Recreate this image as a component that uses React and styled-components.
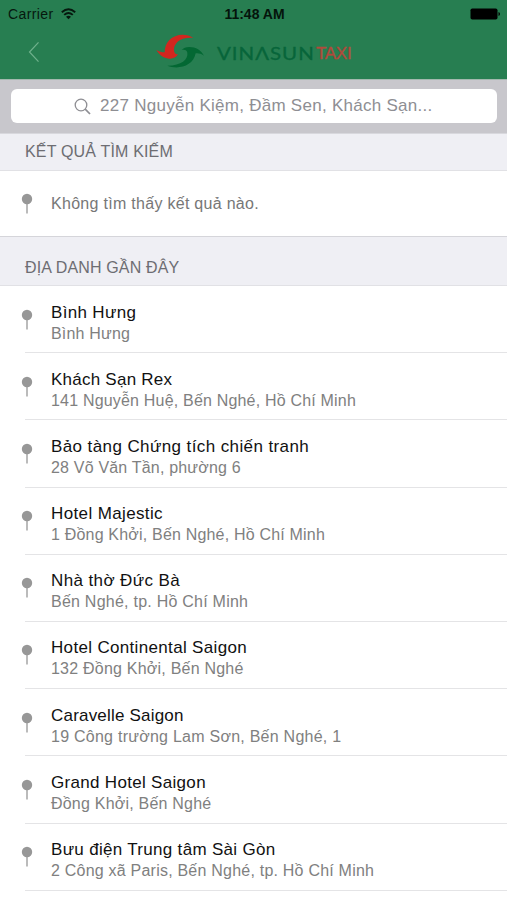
import React from "react";
import styled, { createGlobalStyle } from "styled-components";

const Global = createGlobalStyle`
  * { box-sizing: border-box; }
  body { margin: 0; background: #fff; font-family: "Liberation Sans", Arial, sans-serif; overflow: hidden; }
`;

const Screen = styled.main`
  width: 507px;
  height: 900px;
  overflow: hidden;
  background: #fff;
`;

const Header = styled.header`
  height: 79px;
  background: #277e51;
`;

const StatusBar = styled.div`
  height: 28px;
  padding: 0 6px 0 8px;
  display: grid;
  grid-template-columns: 1fr auto 1fr;
  align-items: center;
  color: #06180e;
  font-size: 14px;
`;

const Carrier = styled.div`
  display: flex;
  align-items: center;
  gap: 7px;
  letter-spacing: 0.4px;
`;

const Clock = styled.div`
  font-weight: 700;
  font-size: 14px;
  letter-spacing: 0;
  color: #04140b;
`;

const BatteryIcon = styled.svg`
  justify-self: end;
`;

const NavBar = styled.div`
  height: 51px;
  display: flex;
  align-items: center;
  padding: 0 0 3px 28px;
`;

const Brand = styled.div`
  display: flex;
  align-items: center;
  margin-left: 116px;
`;

const BrandName = styled.div`
  display: flex;
  align-items: center;
  margin: 4px 0 0 13px;
`;

const Vinasun = styled.span`
  width: 99px;
  font: 400 16.5px/20px Lato, sans-serif;
  letter-spacing: 0.8px;
  color: #07653a;
  -webkit-text-stroke: 0.3px #07653a;
  transform: scaleX(1.24);
  transform-origin: 0 50%;
`;

const Taxi = styled.span`
  font: 400 17px/20px "Liberation Sans", sans-serif;
  letter-spacing: -0.3px;
  color: #b14a3b;
  -webkit-text-stroke: 0.4px #b14a3b;
`;

const SearchBar = styled.div`
  height: 54px;
  padding: 9px 10px 10px 11px;
  background: #c8c7cc;
  border-top: 1px solid #a3b9ae;
`;

const SearchField = styled.div`
  height: 34px;
  border-radius: 6px;
  background: #fff;
  display: flex;
  align-items: center;
  padding-left: 63px;
  gap: 9px;
  color: #8e8e93;
`;

const Line = styled.span`
  display: block;
  white-space: nowrap;
  font-size: ${(p) => p.$size}px;
  line-height: ${(p) => p.$height}px;
  letter-spacing: ${(p) => p.$track || 0}px;
  color: ${(p) => p.$color};
`;

const SectionHeader = styled.h2`
  margin: 0;
  height: ${(p) => p.$height}px;
  padding: 0 0 ${(p) => p.$bottom}px 25px;
  display: flex;
  align-items: flex-end;
  background: #efeff4;
  border-top: 1px solid ${(p) => p.$edge};
  border-bottom: 1px solid #e1e1e5;
  font-weight: 400;
`;

const Row = styled.div`
  height: ${(p) => p.$height}px;
  display: flex;
  padding-left: 21px;
`;

const PinIcon = styled.svg`
  flex: none;
  margin-top: ${(p) => p.$top}px;
`;

const RowText = styled.div`
  flex: 1;
  margin-left: 4px;
  padding: ${(p) => p.$top}px 0 0 14px;
`;

const Body = styled.div`
  flex: 1;
  display: flex;
  position: relative;
  &::after {
    content: "";
    position: absolute;
    left: -8px;
    right: 0;
    bottom: 0;
    height: 1px;
    background: ${(p) => (p.$line ? "#e4e4e6" : "transparent")};
  }
`;

const places = [
  ["Bình Hưng", 0.33, "Bình Hưng", 0.2],
  ["Khách Sạn Rex", 0.24, "141 Nguyễn Huệ, Bến Nghé, Hồ Chí Minh", 0.19],
  ["Bảo tàng Chứng tích chiến tranh", 0.4, "28 Võ Văn Tần, phường 6", 0.19],
  ["Hotel Majestic", 0.37, "1 Đồng Khởi, Bến Nghé, Hồ Chí Minh", 0.19],
  ["Nhà thờ Đức Bà", 0.39, "Bến Nghé, tp. Hồ Chí Minh", 0.24],
  ["Hotel Continental Saigon", 0.33, "132 Đồng Khởi, Bến Nghé", 0.22],
  ["Caravelle Saigon", 0.2, "19 Công trường Lam Sơn, Bến Nghé, 1", 0.25],
  ["Grand Hotel Saigon", 0.31, "Đồng Khởi, Bến Nghé", 0.21],
  ["Bưu điện Trung tâm Sài Gòn", 0.31, "2 Công xã Paris, Bến Nghé, tp. Hồ Chí Minh", 0.22],
];

const Pin = ({ top = 22.5 }) => (
  <PinIcon $top={top} width="12" height="22" viewBox="0 0 12 22">
    <path d="M6 8V20.500" stroke="#a4a4a4" strokeWidth="1.500" />
    <circle cx="6" cy="6" r="5.200" fill="#979797" />
  </PinIcon>
);

const Logo = () => (
  <svg width="48" height="36" viewBox="6 12 144 108">
    <path d="M118 24C96 8 63 12 46 30C36 41 32 53 32 67C23 67 15 65 7 60C16 75 28 84 45 86C57 87 66 83 72 73C65 73 61 69 60 62C58 43 76 20 118 24Z" fill="#d3261f" />
    <path d="M40 107C72 120 118 109 125 70C134 69 141 71 150 77C141 60 126 51 106 51C96 51 88 54 83 60C93 58 99 61 100 68C103 87 83 107 40 107Z" fill="#036833" />
  </svg>
);

export default function App() {
  return (
    <Screen>
      <Global />
      <Header>
        <StatusBar>
          <Carrier>
            Carrier
            <svg width="15" height="12" viewBox="0 0 15 12" fill="none" stroke="#06180e" strokeWidth="1.9">
              <path d="M.8 4.200Q7.500-1.800 14.200 4.200M3.200 6.900Q7.500 3.100 11.800 6.900" />
              <path d="M7.500 11.200L5 8.700Q7.500 6.800 10 8.700Z" fill="#06180e" stroke="none" />
            </svg>
          </Carrier>
          <Clock>11:48 AM</Clock>
          <BatteryIcon width="31" height="12" viewBox="0 0 31 12">
            <rect x=".5" y=".5" width="27" height="11" rx="1.800" fill="#000" />
            <path d="M28.500 4Q30 4.500 30 6T28.500 8Z" fill="#000" />
          </BatteryIcon>
        </StatusBar>
        <NavBar>
          <svg width="12" height="22" viewBox="0 0 12 22" fill="none" stroke="#6fb18c" strokeWidth="1.200">
            <path d="M10.500 1.300L1.500 11L10.500 20.700" />
          </svg>
          <Brand>
            <Logo />
            <BrandName>
              <Vinasun>VINΛSUN</Vinasun>
              <Taxi>TAXI</Taxi>
            </BrandName>
          </Brand>
        </NavBar>
      </Header>
      <SearchBar>
        <SearchField>
          <svg width="17" height="17" viewBox="0 0 17 17" fill="none" stroke="#8e8e93" strokeWidth="1.300">
            <circle cx="7" cy="7" r="5.800" />
            <path d="M11.200 11.200L16 16" strokeWidth="1.700" />
          </svg>
          <Line $size={17} $height={20} $track={0.27} $color="#8e8e93">227 Nguyễn Kiệm, Đầm Sen, Khách Sạn...</Line>
        </SearchField>
      </SearchBar>
      <SectionHeader $height={38} $bottom={8} $edge="#d8d8dd">
        <Line $size={16} $height={20} $track={0.17} $color="#6d6d72">KẾT QUẢ TÌM KIẾM</Line>
      </SectionHeader>
      <Row $height={65}>
        <Pin top={22} />
        <Body>
          <RowText $top={23}>
            <Line $size={16} $height={20} $track={0.29} $color="#777">Không tìm thấy kết quả nào.</Line>
          </RowText>
        </Body>
      </Row>
      <SectionHeader $height={50} $bottom={7} $edge="#d5d5da">
        <Line $size={16} $height={20} $track={0.14} $color="#6d6d72">ĐỊA DANH GẦN ĐÂY</Line>
      </SectionHeader>
      {places.map(([title, titleTrack, address, addressTrack]) => (
        <Row key={title} $height={67.2}>
          <Pin />
          <Body $line>
            <RowText $top={15.5}>
              <Line $size={17} $height={21} $track={titleTrack} $color="#111">{title}</Line>
              <Line $size={16} $height={21} $track={addressTrack} $color="#808080">{address}</Line>
            </RowText>
          </Body>
        </Row>
      ))}
    </Screen>
  );
}
